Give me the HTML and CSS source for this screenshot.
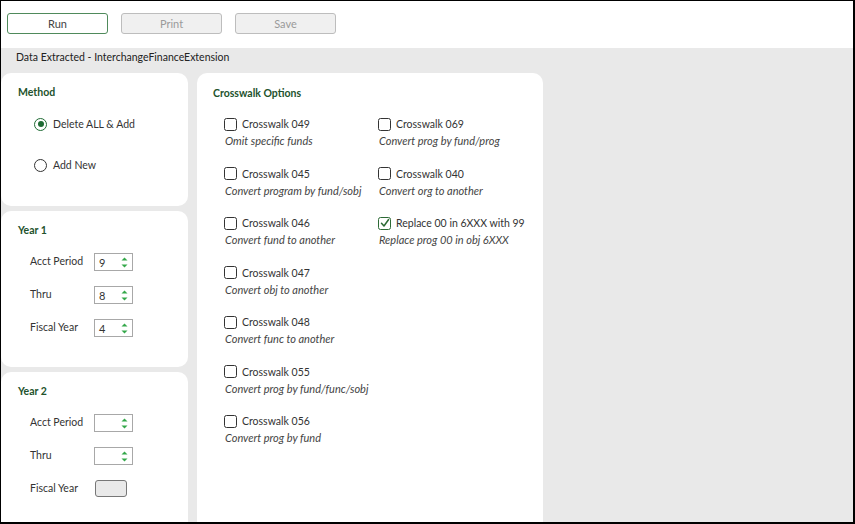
FILE: index.html
```html
<!DOCTYPE html>
<html>
<head>
<meta charset="utf-8">
<link rel="stylesheet" href="styles.css">
</head>
<body>
<div class="frame">
  <header class="toolbar">
    <button class="btn btn-primary">Run</button>
    <button class="btn" disabled>Print</button>
    <button class="btn" disabled>Save</button>
  </header>
  <main class="content">
    <div class="crumb">Data Extracted - InterchangeFinanceExtension</div>
    <div class="panels">
      <div class="left">
        <section class="card card-method">
          <h3 class="card-title">Method</h3>
          <div class="radios">
            <label class="radio-row"><span class="radio checked"></span>Delete ALL &amp; Add</label>
            <label class="radio-row"><span class="radio"></span>Add New</label>
          </div>
        </section>
        <section class="card card-year">
          <h3 class="card-title">Year 1</h3>
          <div class="fields">
            <div class="field"><span class="field-label">Acct Period</span>
              <span class="spin"><span class="spin-val">9</span><svg class="spin-arrows" width="7" height="11" viewBox="0 0 7 11"><path d="M3.5 0.5 L6.5 3.5 L0.5 3.5 Z" /><path d="M0.5 7.5 L6.5 7.5 L3.5 10.5 Z" /></svg></span></div>
            <div class="field"><span class="field-label">Thru</span>
              <span class="spin"><span class="spin-val">8</span><svg class="spin-arrows" width="7" height="11" viewBox="0 0 7 11"><path d="M3.5 0.5 L6.5 3.5 L0.5 3.5 Z" /><path d="M0.5 7.5 L6.5 7.5 L3.5 10.5 Z" /></svg></span></div>
            <div class="field"><span class="field-label">Fiscal Year</span>
              <span class="spin"><span class="spin-val">4</span><svg class="spin-arrows" width="7" height="11" viewBox="0 0 7 11"><path d="M3.5 0.5 L6.5 3.5 L0.5 3.5 Z" /><path d="M0.5 7.5 L6.5 7.5 L3.5 10.5 Z" /></svg></span></div>
          </div>
        </section>
        <section class="card card-year card-last">
          <h3 class="card-title">Year 2</h3>
          <div class="fields">
            <div class="field"><span class="field-label">Acct Period</span>
              <span class="spin"><span class="spin-val"></span><svg class="spin-arrows" width="7" height="11" viewBox="0 0 7 11"><path d="M3.5 0.5 L6.5 3.5 L0.5 3.5 Z" /><path d="M0.5 7.5 L6.5 7.5 L3.5 10.5 Z" /></svg></span></div>
            <div class="field"><span class="field-label">Thru</span>
              <span class="spin"><span class="spin-val"></span><svg class="spin-arrows" width="7" height="11" viewBox="0 0 7 11"><path d="M3.5 0.5 L6.5 3.5 L0.5 3.5 Z" /><path d="M0.5 7.5 L6.5 7.5 L3.5 10.5 Z" /></svg></span></div>
            <div class="field"><span class="field-label">Fiscal Year</span>
              <span class="disabled-input"></span></div>
          </div>
        </section>
      </div>
      <section class="card card-cross">
        <h3 class="card-title">Crosswalk Options</h3>
        <div class="options">
          <div class="opt"><div class="opt-row"><span class="cb"></span>Crosswalk 049</div><div class="opt-desc">Omit specific funds</div></div>
          <div class="opt"><div class="opt-row"><span class="cb"></span>Crosswalk 045</div><div class="opt-desc">Convert program by fund/sobj</div></div>
          <div class="opt"><div class="opt-row"><span class="cb"></span>Crosswalk 046</div><div class="opt-desc">Convert fund to another</div></div>
          <div class="opt"><div class="opt-row"><span class="cb"></span>Crosswalk 047</div><div class="opt-desc">Convert obj to another</div></div>
          <div class="opt"><div class="opt-row"><span class="cb"></span>Crosswalk 048</div><div class="opt-desc">Convert func to another</div></div>
          <div class="opt"><div class="opt-row"><span class="cb"></span>Crosswalk 055</div><div class="opt-desc">Convert prog by fund/func/sobj</div></div>
          <div class="opt"><div class="opt-row"><span class="cb"></span>Crosswalk 056</div><div class="opt-desc">Convert prog by fund</div></div>
          <div class="opt"><div class="opt-row"><span class="cb"></span>Crosswalk 069</div><div class="opt-desc">Convert prog by fund/prog</div></div>
          <div class="opt"><div class="opt-row"><span class="cb"></span>Crosswalk 040</div><div class="opt-desc">Convert org to another</div></div>
          <div class="opt"><div class="opt-row"><span class="cb cb-checked"><svg width="10" height="10" viewBox="0 0 10 10"><path d="M1.5 5.2 L4 8 L8.6 1.5" fill="none" stroke="#2d6a35" stroke-width="1.5" stroke-linecap="round" stroke-linejoin="round"/></svg></span>Replace 00 in 6XXX with 99</div><div class="opt-desc">Replace prog 00 in obj 6XXX</div></div>
        </div>
      </section>
    </div>
  </main>
</div>
</body>
</html>
```

FILE: styles.css
```css
* { box-sizing: border-box; }
html, body { margin: 0; padding: 0; background: #fff; }
body { font-family: Lato, "Open Sans", sans-serif; color: #333; }

.frame {
  width: 855px;
  height: 524px;
  border: 1px solid #000;
  border-right-width: 2px;
  border-bottom-width: 2px;
  display: flex;
  flex-direction: column;
  overflow: hidden;
}

.toolbar {
  height: 47px;
  flex: none;
  display: flex;
  gap: 13px;
  padding: 12px 6px 0;
  background: #fff;
}
.btn {
  width: 101px;
  height: 21px;
  border: 1px solid #bdbdbd;
  border-radius: 3px;
  background: #f0f0f0;
  color: #9a9a9a;
  font-family: Lato, "Open Sans", sans-serif;
  font-size: 11px;
  padding: 0;
}
.btn-primary {
  border-color: #4f8a5b;
  background: #fff;
  color: #444;
}

.content {
  flex: 1;
  background: #e9e9e9;
  overflow: hidden;
  min-height: 0;
}
.crumb {
  font-size: 10.5px;
  line-height: 14px;
  padding: 2px 0 9px 15px;
  color: #222;
}
.panels {
  display: flex;
  gap: 9px;
  align-items: flex-start;
}
.left {
  width: 187px;
  display: flex;
  flex-direction: column;
  gap: 5px;
}
.card {
  background: #fff;
  border-radius: 10px;
}
.card-title {
  margin: 0;
  font-size: 10.5px;
  line-height: 14px;
  font-weight: 700;
  color: #22522c;
}
.card-method { height: 133px; padding: 12px 17px 0; }
.radios { display: flex; flex-direction: column; gap: 27px; padding: 18px 0 0 16px; }
.radio-row { display: flex; align-items: center; gap: 6px; font-size: 10.5px; height: 14px; color: #333; }
.radio {
  width: 13px; height: 13px;
  border: 1.3px solid #333;
  border-radius: 50%;
  display: inline-flex;
  align-items: center;
  justify-content: center;
}
.radio.checked { border-color: #1f6b34; border-width: 1.6px; }
.radio.checked::after {
  content: "";
  width: 6px; height: 6px;
  border-radius: 50%;
  background: #1f6b34;
}

.card-year { height: 156px; padding: 12px 17px 0; }
.card-last { height: 170px; }
.fields { display: flex; flex-direction: column; gap: 15px; padding: 16px 0 0 12px; }
.field { display: flex; align-items: flex-start; height: 18px; }
.field-label { width: 64px; font-size: 10.5px; line-height: 14px; padding-top: 1px; color: #333; }
.spin {
  width: 39px; height: 18px;
  border: 1px solid #a8a8a8;
  display: flex;
  align-items: center;
  justify-content: space-between;
  padding: 0 4px 0 4px;
}
.spin-val { font-size: 11px; color: #333; }
.spin-arrows path { fill: #34a84a; }
.disabled-input {
  width: 32px; height: 17px;
  margin-left: 1px;
  border: 1px solid #777;
  border-radius: 3px;
  background: #e9e9e9;
}

.card-cross { width: 346px; height: 470px; padding: 13px 16px 0; }
.options {
  display: grid;
  grid-template-columns: 154px 1fr;
  grid-template-rows: repeat(7, 49.5px);
  grid-auto-flow: column;
  padding: 17px 0 0 11px;
}
.opt { display: flex; flex-direction: column; }
.opt-row { display: flex; align-items: center; gap: 5px; height: 14px; font-size: 10.5px; color: #333; }
.cb {
  width: 13px; height: 13px;
  border: 1.5px solid #333;
  border-radius: 2.5px;
  display: inline-flex;
  align-items: center;
  justify-content: center;
}
.cb-checked { border-color: #2d6a35; }
.opt-desc { margin-top: 3px; font-size: 11px; line-height: 13px; font-style: italic; color: #444; padding-left: 1px; }
```
